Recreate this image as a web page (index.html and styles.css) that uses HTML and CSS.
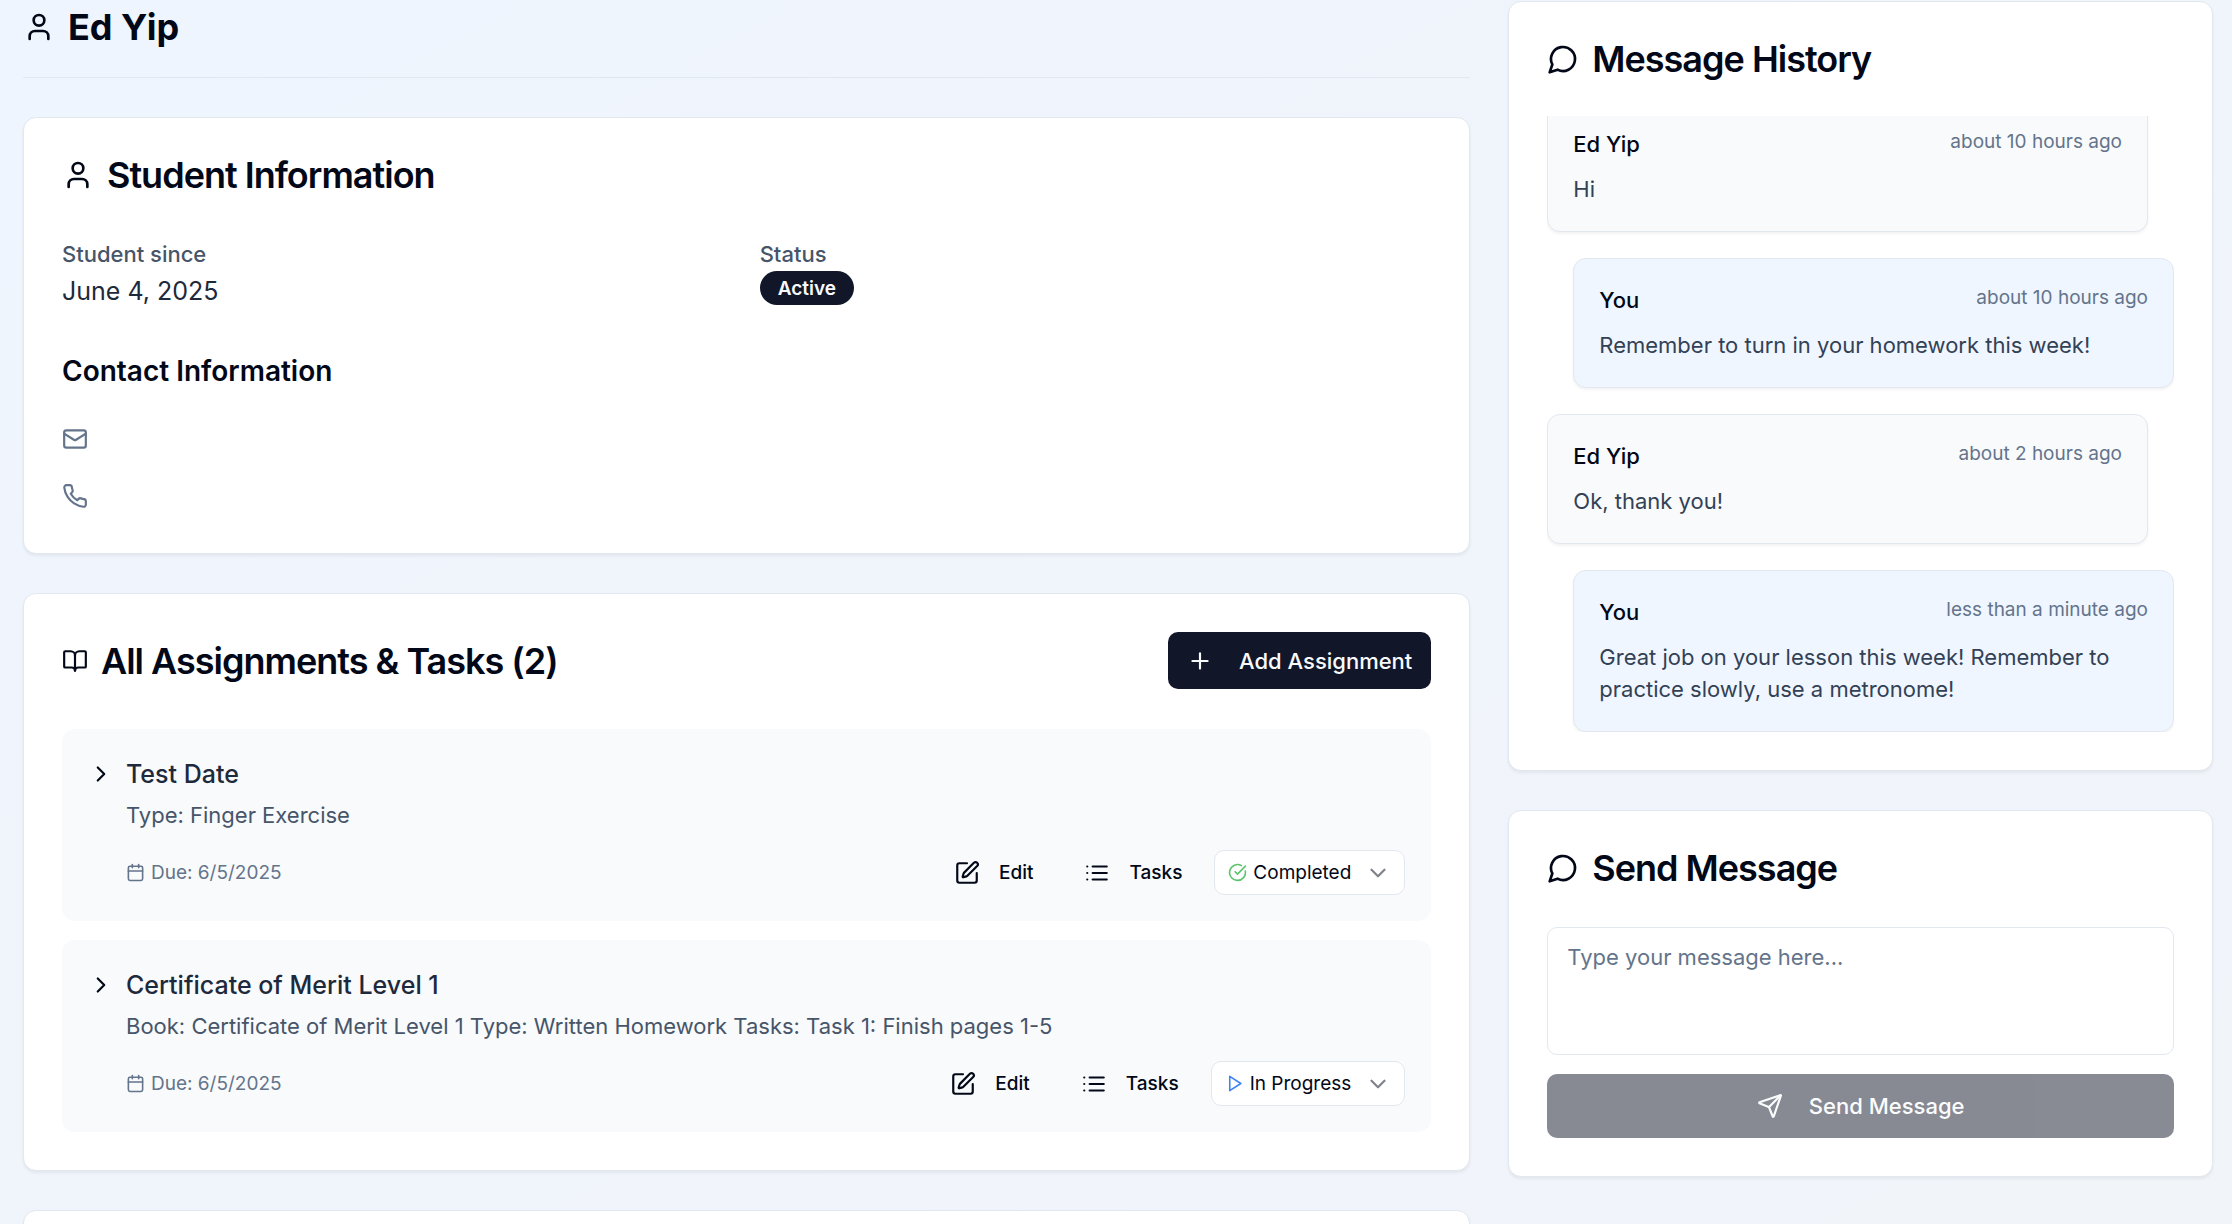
FILE: index.html
```html
<!DOCTYPE html>
<html lang="en">
<head>
<meta charset="utf-8">
<meta name="viewport" content="width=device-width, initial-scale=1">
<title>Ed Yip</title>
<link rel="stylesheet" href="styles.css">
</head>
<body>
<svg class="sprite" aria-hidden="true">
  <symbol id="user" viewBox="0 0 24 24"><path d="M19 21v-2a4 4 0 0 0-4-4H9a4 4 0 0 0-4 4v2"/><circle cx="12" cy="7" r="4"/></symbol>
  <symbol id="mail" viewBox="0 0 24 24"><rect width="20" height="16" x="2" y="4" rx="2"/><path d="m22 7-8.97 5.7a1.94 1.94 0 0 1-2.06 0L2 7"/></symbol>
  <symbol id="phone" viewBox="0 0 24 24"><path d="M22 16.92v3a2 2 0 0 1-2.18 2 19.79 19.79 0 0 1-8.63-3.07 19.5 19.5 0 0 1-6-6 19.79 19.79 0 0 1-3.07-8.67A2 2 0 0 1 4.11 2h3a2 2 0 0 1 2 1.72 12.84 12.84 0 0 0 .7 2.81 2 2 0 0 1-.45 2.11L8.09 9.91a16 16 0 0 0 6 6l1.27-1.27a2 2 0 0 1 2.11-.45 12.84 12.84 0 0 0 2.81.7A2 2 0 0 1 22 16.92z"/></symbol>
  <symbol id="book" viewBox="0 0 24 24"><path d="M12 7v14"/><path d="M3 18a1 1 0 0 1-1-1V4a1 1 0 0 1 1-1h5a4 4 0 0 1 4 4 4 4 0 0 1 4-4h5a1 1 0 0 1 1 1v13a1 1 0 0 1-1 1h-6a3 3 0 0 0-3 3 3 3 0 0 0-3-3z"/></symbol>
  <symbol id="plus" viewBox="0 0 24 24"><path d="M5 12h14"/><path d="M12 5v14"/></symbol>
  <symbol id="chevron-right" viewBox="0 0 24 24"><path d="m9 18 6-6-6-6"/></symbol>
  <symbol id="chevron-down" viewBox="0 0 24 24"><path d="m6 9 6 6 6-6"/></symbol>
  <symbol id="calendar" viewBox="0 0 24 24"><path d="M8 2v4"/><path d="M16 2v4"/><rect width="18" height="18" x="3" y="4" rx="2"/><path d="M3 10h18"/></symbol>
  <symbol id="pen" viewBox="0 0 24 24"><path d="M12 3H5a2 2 0 0 0-2 2v14a2 2 0 0 0 2 2h14a2 2 0 0 0 2-2v-7"/><path d="M18.375 2.625a1 1 0 0 1 3 3l-9.013 9.014a2 2 0 0 1-.853.505l-2.873.84a.5.5 0 0 1-.62-.62l.84-2.873a2 2 0 0 1 .506-.852z"/></symbol>
  <symbol id="list" viewBox="0 0 24 24"><path d="M3 12h.01"/><path d="M3 18h.01"/><path d="M3 6h.01"/><path d="M8 12h13"/><path d="M8 18h13"/><path d="M8 6h13"/></symbol>
  <symbol id="check" viewBox="0 0 24 24"><path d="M21.801 10A10 10 0 1 1 17 3.335"/><path d="m9 11 3 3L22 4"/></symbol>
  <symbol id="play" viewBox="0 0 24 24"><path d="m6 3 14 9-14 9V3z"/></symbol>
  <symbol id="message" viewBox="0 0 24 24"><path d="M7.9 20A9 9 0 1 0 4 16.1L2 22Z"/></symbol>
  <symbol id="send" viewBox="0 0 24 24"><path d="M14.536 21.686a.5.5 0 0 0 .937-.024l6.5-19a.496.496 0 0 0-.635-.635l-19 6.5a.5.5 0 0 0-.024.937l7.93 3.18a2 2 0 0 1 1.112 1.11z"/><path d="m21.854 2.147-10.94 10.939"/></symbol>
</svg>

<div class="page">
  <main class="column">
    <header class="page-header">
      <svg class="icon icon-lg"><use href="#user"/></svg>
      <h1 class="page-title">Ed Yip</h1>
    </header>

    <section class="card">
      <h2 class="card-title"><svg class="icon icon-lg"><use href="#user"/></svg>Student Information</h2>
      <dl class="facts">
        <div>
          <dt class="fact-label">Student since</dt>
          <dd class="fact-value">June 4, 2025</dd>
        </div>
        <div>
          <dt class="fact-label">Status</dt>
          <dd class="fact-value"><span class="badge">Active</span></dd>
        </div>
      </dl>
      <h3 class="subtitle">Contact Information</h3>
      <ul class="contacts">
        <li class="contact"><svg class="icon"><use href="#mail"/></svg></li>
        <li class="contact"><svg class="icon"><use href="#phone"/></svg></li>
      </ul>
    </section>

    <section class="card">
      <div class="card-bar">
        <h2 class="card-title"><svg class="icon"><use href="#book"/></svg>All Assignments &amp; Tasks (2)</h2>
        <button class="button" type="button"><svg class="icon"><use href="#plus"/></svg>Add Assignment</button>
      </div>
      <div class="assignments">
        <article class="assignment">
          <button class="toggle" type="button" aria-label="Expand Test Date"><svg class="icon"><use href="#chevron-right"/></svg></button>
          <div class="assignment-body">
            <h3 class="assignment-title">Test Date</h3>
            <p class="assignment-text">Type: Finger Exercise</p>
            <div class="assignment-footer">
              <span class="due"><svg class="icon icon-sm"><use href="#calendar"/></svg>Due: 6/5/2025</span>
              <div class="actions">
                <button class="ghost" type="button"><svg class="icon"><use href="#pen"/></svg>Edit</button>
                <button class="ghost" type="button"><svg class="icon"><use href="#list"/></svg>Tasks</button>
                <div class="status">
                  <svg class="icon icon-sm status-done"><use href="#check"/></svg>
                  <select class="status-select" aria-label="Status of Test Date"><option>Not Started</option><option>In Progress</option><option selected>Completed</option></select>
                  <svg class="icon status-arrow"><use href="#chevron-down"/></svg>
                </div>
              </div>
            </div>
          </div>
        </article>
        <article class="assignment">
          <button class="toggle" type="button" aria-label="Expand Certificate of Merit Level 1"><svg class="icon"><use href="#chevron-right"/></svg></button>
          <div class="assignment-body">
            <h3 class="assignment-title">Certificate of Merit Level 1</h3>
            <p class="assignment-text">Book: Certificate of Merit Level 1 Type: Written Homework Tasks: Task 1: Finish pages 1-5</p>
            <div class="assignment-footer">
              <span class="due"><svg class="icon icon-sm"><use href="#calendar"/></svg>Due: 6/5/2025</span>
              <div class="actions">
                <button class="ghost" type="button"><svg class="icon"><use href="#pen"/></svg>Edit</button>
                <button class="ghost" type="button"><svg class="icon"><use href="#list"/></svg>Tasks</button>
                <div class="status">
                  <svg class="icon icon-sm status-active"><use href="#play"/></svg>
                  <select class="status-select" aria-label="Status of Certificate of Merit Level 1"><option>Not Started</option><option selected>In Progress</option><option>Completed</option></select>
                  <svg class="icon status-arrow"><use href="#chevron-down"/></svg>
                </div>
              </div>
            </div>
          </div>
        </article>
      </div>
    </section>

    <section class="card"></section>
  </main>

  <aside class="column side">
    <section class="card">
      <h2 class="card-title"><svg class="icon icon-lg"><use href="#message"/></svg>Message History</h2>
      <div class="history">
        <div class="messages">
          <article class="message">
            <div class="message-head"><strong class="message-name">Ed Yip</strong><time class="message-time">about 10 hours ago</time></div>
            <p class="message-text">Hi</p>
          </article>
          <article class="message message-own">
            <div class="message-head"><strong class="message-name">You</strong><time class="message-time">about 10 hours ago</time></div>
            <p class="message-text">Remember to turn in your homework this week!</p>
          </article>
          <article class="message">
            <div class="message-head"><strong class="message-name">Ed Yip</strong><time class="message-time">about 2 hours ago</time></div>
            <p class="message-text">Ok, thank you!</p>
          </article>
          <article class="message message-own">
            <div class="message-head"><strong class="message-name">You</strong><time class="message-time">less than a minute ago</time></div>
            <p class="message-text">Great job on your lesson this week! Remember to practice slowly, use a metronome!</p>
          </article>
        </div>
      </div>
    </section>

    <section class="card">
      <h2 class="card-title"><svg class="icon icon-lg"><use href="#message"/></svg>Send Message</h2>
      <form class="compose">
        <textarea class="compose-input" placeholder="Type your message here..." aria-label="Message"></textarea>
        <button class="button button-wide" type="submit" disabled><svg class="icon"><use href="#send"/></svg>Send Message</button>
      </form>
    </section>
  </aside>
</div>
</body>
</html>
```
FILE: styles.css
```css
:root {
  --ink: #020817;
  --navy: #111629;
  --slate-800: #1e293b;
  --slate-700: #334155;
  --slate-600: #475569;
  --slate-500: #64748b;
  --line: #e2e8f0;
  --panel: #f8fafc;
}

* { box-sizing: border-box; }

body {
  margin: 0;
  min-height: 100vh;
  background: linear-gradient(to bottom right, #eff5fe, #f1f4f9);
  color: var(--ink);
  font: 400 22px/32px Inter, "Liberation Sans", sans-serif;
}

h1, h2, h3, p, dl, dd, ul { margin: 0; padding: 0; }
ul { list-style: none; }
button, select, textarea { font: inherit; color: inherit; }

.sprite { display: none; }

.icon {
  flex: none;
  width: 26px;
  height: 26px;
  fill: none;
  stroke: currentColor;
  stroke-width: 2;
  stroke-linecap: round;
  stroke-linejoin: round;
}
.icon-lg { width: 32px; height: 32px; }
.icon-sm { width: 19px; height: 19px; }

.page {
  display: grid;
  grid-template-columns: repeat(3, 1fr);
  gap: 38px;
  padding: 0 19px 0 23px;
  height: 100vh;
  overflow: hidden;
}

.column {
  grid-column: span 2;
  display: flex;
  flex-direction: column;
  gap: 39px;
  min-width: 0;
}
.column > * { flex: none; }
.side {
  grid-column: span 1;
  padding-top: 1px;
}

.page-header {
  display: flex;
  align-items: center;
  gap: 13px;
  padding: 3px 0 26px;
  border-bottom: 1px solid var(--line);
}
.page-title {
  font-size: 36px;
  line-height: 48px;
  font-weight: 700;
}

.card {
  padding: 38px;
  background: #fff;
  border: 1px solid var(--line);
  border-radius: 13px;
  box-shadow: 0 2px 3px rgb(0 0 0 / 6%);
}
.card-title {
  display: flex;
  align-items: center;
  gap: 13px;
  font-size: 36px;
  line-height: 38px;
  font-weight: 600;
  letter-spacing: -1px;
}
.card-bar {
  display: flex;
  align-items: center;
  justify-content: space-between;
}

.facts {
  display: grid;
  grid-template-columns: 1fr 1fr;
  gap: 26px;
  margin-top: 44px;
}
.fact-label {
  font-weight: 500;
  color: var(--slate-600);
}
.fact-value {
  margin-top: 1px;
  font-size: 25px;
  line-height: 40px;
  color: var(--slate-800);
}
.badge {
  display: block;
  width: fit-content;
  padding: 2px 18px 0;
  border-radius: 999px;
  background: var(--navy);
  color: var(--panel);
  font-size: 19px;
  line-height: 32px;
  font-weight: 600;
}

.subtitle {
  margin: 38px 0 26px;
  font-size: 28px;
  line-height: 45px;
  font-weight: 600;
}
.contacts {
  display: grid;
  gap: 19px;
  color: var(--slate-500);
}
.contact {
  display: flex;
  align-items: center;
  height: 38px;
}

.button {
  display: flex;
  align-items: center;
  justify-content: center;
  gap: 26px;
  height: 57px;
  padding: 0 19px;
  border: 0;
  border-radius: 10px;
  background: var(--navy);
  color: var(--panel);
  font-weight: 500;
}
.button-wide {
  width: 100%;
  height: 64px;
}
.button:disabled { opacity: 0.5; }

.assignments {
  display: grid;
  gap: 19px;
  margin-top: 40px;
}
.assignment {
  display: flex;
  align-items: flex-start;
  gap: 12px;
  padding: 26px;
  border-radius: 13px;
  background: var(--panel);
}
.toggle {
  display: flex;
  align-items: center;
  height: 38px;
  padding: 0;
  border: 0;
  background: none;
}
.assignment-body { flex: 1; min-width: 0; }
.assignment-title {
  font-size: 25px;
  line-height: 38px;
  font-weight: 500;
  color: var(--slate-800);
}
.assignment-text {
  margin-top: 6px;
  color: var(--slate-600);
}
.assignment-footer {
  display: flex;
  align-items: center;
  justify-content: space-between;
  margin-top: 19px;
}
.due {
  display: flex;
  align-items: center;
  gap: 6px;
  font-size: 19px;
  color: var(--slate-500);
}
.actions {
  display: flex;
  align-items: center;
  gap: 13px;
}
.ghost {
  display: flex;
  align-items: center;
  gap: 19px;
  height: 45px;
  padding: 0 19px;
  border: 0;
  background: none;
  font-size: 19px;
  font-weight: 500;
}
.status {
  display: flex;
  align-items: center;
  gap: 6px;
  height: 45px;
  padding: 0 13px;
  border: 1px solid var(--line);
  border-radius: 10px;
  background: #fff;
}
.status-select {
  appearance: none;
  field-sizing: content;
  padding: 0;
  border: 0;
  background: none;
  font-size: 19px;
}
.status-done { color: #5cc46c; }
.status-active { color: #3b82f6; }
.status-arrow { margin-left: 8px; opacity: 0.5; }

.history {
  display: flex;
  flex-direction: column-reverse;
  height: 616px;
  margin-top: 38px;
  overflow-y: auto;
  scrollbar-width: none;
}
.messages {
  display: flex;
  flex-direction: column;
  gap: 26px;
}
.message {
  margin-right: 26px;
  padding: 25px 25px 26px;
  border: 1px solid var(--line);
  border-radius: 13px;
  background: var(--panel);
  box-shadow: 0 2px 3px rgb(0 0 0 / 5%);
}
.message-own {
  margin: 0 0 0 26px;
  background: #eff6ff;
}
.message-head {
  display: flex;
  align-items: flex-start;
  justify-content: space-between;
  margin-bottom: 13px;
}
.message-name { font-weight: 500; }
.message-time {
  font-size: 19px;
  line-height: 28px;
  color: var(--slate-500);
}
.message-text { color: var(--slate-700); }

.compose {
  display: grid;
  gap: 19px;
  margin-top: 40px;
}
.compose-input {
  display: block;
  width: 100%;
  height: 128px;
  padding: 13px 19px;
  border: 1px solid var(--line);
  border-radius: 10px;
  background: #fff;
  resize: none;
}
.compose-input::placeholder { color: var(--slate-500); opacity: 1; }
```
